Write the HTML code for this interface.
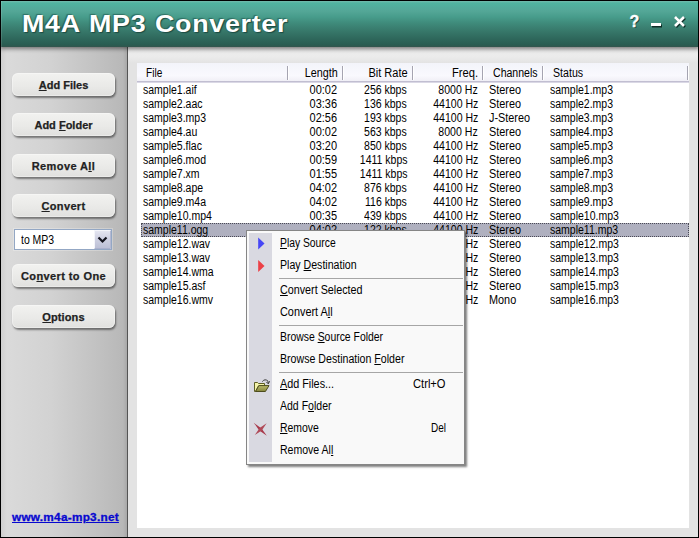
<!DOCTYPE html>
<html><head><meta charset="utf-8"><title>M4A MP3 Converter</title>
<style>
html,body{margin:0;padding:0;}
body{width:699px;height:538px;overflow:hidden;background:#000;font-family:"Liberation Sans",sans-serif;font-size:11px;color:#000;position:relative;}
#win{position:absolute;left:1px;top:1px;width:697px;height:536px;background:#e3e3e3;overflow:hidden;}
#title{position:absolute;left:0;top:0;width:697px;height:46px;background:linear-gradient(to bottom,#74bbad 0px,#50b4a0 2px,#52ad9c 6px,#54a797 10px,#479c8b 16px,#3f8b7b 22px,#37786a 30px,#2e675b 38px,#295c51 44px,#33544c 46px);box-shadow:0 1px 4px 1px rgba(0,0,0,0.45),1px 0 0 rgba(255,255,255,.12) inset;z-index:5;}
#title h1{position:absolute;left:0;top:0;margin:0;font-size:24px;line-height:28px;font-weight:bold;color:#fff;white-space:nowrap;}
#title h1 span{position:absolute;top:9px;text-shadow:1px 1px 1px #1d4a42,-1px -1px 1px rgba(30,80,70,.6);letter-spacing:0.6px;transform:scaleX(1.12);transform-origin:0 0;}
#side{position:absolute;left:0;top:45px;width:126px;height:491px;background:linear-gradient(to right,#cfcfcf 0px,#dadada 6px,#d2d2d2 50px,#c2c2c2 95px,#b8b8b8 122px,#a8a8a8 126px);}
#rtop{position:absolute;left:127px;top:46px;width:570px;height:16px;background:linear-gradient(to bottom,#e3e3e3 0,#ececec 7px,#ebebeb 10px,#e3e3e3 16px);}
#sideline{position:absolute;left:126px;top:45px;width:1px;height:491px;background:#555;}
.btn{position:absolute;left:11px;width:103px;height:23px;border-radius:6px;background:linear-gradient(to bottom,#f2f2f0,#e9e9e7 60%,#e0e0de);box-shadow:1px 2px 2px rgba(0,0,0,.45),0 0 0 1px rgba(255,255,255,.35) inset;text-align:center;font-weight:bold;font-size:11px;line-height:25px;color:#222;-webkit-text-stroke:0.25px #222;}
.btn u{text-decoration:underline;}
#list{position:absolute;left:136px;top:62px;width:552px;height:465px;background:#fff;}
#hdr{position:absolute;left:0;top:0;width:552px;height:18px;background:linear-gradient(to bottom,#f3f4fa,#f9f9fe 70%,#f0eff6);border-bottom:1px solid #c1bed1;box-shadow:0 1px 0 #dad8e5;}
.row{position:absolute;left:136px;width:552px;height:14px;line-height:14px;white-space:nowrap;}

.row span{position:absolute;top:0;font-size:12px;transform-origin:0 50%;}
.row .c2,.row .c3,.row .c4{transform-origin:100% 50%;}
.c1{left:5.5px;transform:scaleX(.875);} .c2{right:352px;transform:scaleX(.915);} .c3{right:282px;transform:scaleX(.875);} .c4{right:211px;transform:scaleX(.88);} .c5{left:352px;transform:scaleX(.905);} .c6{left:412.5px;transform:scaleX(.875);}
.row.sel::before{content:'';position:absolute;left:4px;right:0;top:0;bottom:0;background:#afb0bf;outline:1px dotted #4a4a55;outline-offset:-1px;}
.hl{position:absolute;top:0;height:19px;line-height:20px;white-space:nowrap;font-size:12px;transform-origin:0 50%;}
.sep{position:absolute;top:3px;width:1px;height:14px;background:#a5a4b1;box-shadow:1px 0 0 #fff;}
#combo{position:absolute;left:13px;top:228px;width:98px;height:21px;background:#fff;border:1px solid #93a7c4;box-sizing:border-box;box-shadow:0 0 0 1px rgba(255,255,255,.25);}
#combo span{position:absolute;left:6px;top:3px;line-height:14px;font-size:12px;transform:scaleX(.87);transform-origin:0 50%;white-space:nowrap;}
#combo .dd{position:absolute;right:0px;top:0px;width:17px;height:19px;background:linear-gradient(to bottom,#e4e5f0,#cfd1e2 45%,#bcc0d6);border:1px solid #f4f5fa;border-right-color:#b4b9d2;border-bottom-color:#aab0cc;box-sizing:border-box;border-radius:1px;}
#link{position:absolute;left:11px;top:510px;font-weight:bold;font-size:11px;line-height:13px;color:#0808d0;text-decoration:underline;white-space:nowrap;letter-spacing:0.25px;-webkit-text-stroke:0.3px #0808d0;transform:scaleX(1.07);transform-origin:0 0;}
#menu{position:absolute;left:245px;top:229px;width:219px;height:235px;box-sizing:border-box;border:1px solid #868686;background:#f9f9f9;box-shadow:2px 2px 2px rgba(0,0,0,.5);z-index:10;}
#menu .strip{position:absolute;left:2px;top:2px;width:23px;height:229px;background:#d9d9e1;}
.mi{position:absolute;left:32.7px;height:22px;line-height:22px;white-space:nowrap;margin-top:-1px;font-size:12px;transform-origin:0 50%;}
.mk{position:absolute;height:22px;line-height:22px;white-space:nowrap;margin-top:-1px;font-size:12px;transform-origin:0 50%;}
.ms{position:absolute;left:32px;width:184px;height:1px;background:#a6a6a6;}
.tb{position:absolute;z-index:6;color:#fff;font-weight:bold;text-shadow:1px 1px 0 #143a33;}
</style></head><body>
<div id="win">
<div id="title"><h1><span style="left:21px">M4A</span><span style="left:88px">MP3</span><span style="left:154px">Converter</span></h1></div>
<div id="rtop"></div><div id="side"></div><div id="sideline"></div>
<div class="btn" style="top:72px"><u>A</u>dd Files</div>
<div class="btn" style="top:112px">Add <u>F</u>older</div>
<div class="btn" style="top:153px;letter-spacing:0.4px">Remove A<u>l</u>l</div>
<div class="btn" style="top:193px;letter-spacing:0.35px"><u>C</u>onvert</div>
<div class="btn" style="top:263px;letter-spacing:0.4px">Co<u>n</u>vert to One</div>
<div class="btn" style="top:304px;letter-spacing:0.1px"><u>O</u>ptions</div>
<div id="list"><div id="hdr">
<span class="hl" style="left:9px;transform:scaleX(.84)">File</span>
<span class="hl" style="right:351px;transform-origin:100% 50%;transform:scaleX(.90)">Length</span>
<span class="hl" style="right:281px;transform-origin:100% 50%;transform:scaleX(.92)">Bit Rate</span>
<span class="hl" style="right:211px;transform-origin:100% 50%;transform:scaleX(.93)">Freq.</span>
<span class="hl" style="left:356px;transform:scaleX(.88)">Channels</span>
<span class="hl" style="left:415.5px;transform:scaleX(.885)">Status</span>
<i class="sep" style="left:150px"></i><i class="sep" style="left:205px"></i><i class="sep" style="left:275px"></i><i class="sep" style="left:345px"></i><i class="sep" style="left:405px"></i><i class="sep" style="left:550px"></i>
</div></div>
<div class="row" style="top:82px"><span class="c1">sample1.aif</span><span class="c2">00:02</span><span class="c3">256 kbps</span><span class="c4">8000 Hz</span><span class="c5">Stereo</span><span class="c6">sample1.mp3</span></div>
<div class="row" style="top:96px"><span class="c1">sample2.aac</span><span class="c2">03:36</span><span class="c3">136 kbps</span><span class="c4">44100 Hz</span><span class="c5">Stereo</span><span class="c6">sample2.mp3</span></div>
<div class="row" style="top:110px"><span class="c1">sample3.mp3</span><span class="c2">02:56</span><span class="c3">193 kbps</span><span class="c4">44100 Hz</span><span class="c5">J-Stereo</span><span class="c6">sample3.mp3</span></div>
<div class="row" style="top:124px"><span class="c1">sample4.au</span><span class="c2">00:02</span><span class="c3">563 kbps</span><span class="c4">8000 Hz</span><span class="c5">Stereo</span><span class="c6">sample4.mp3</span></div>
<div class="row" style="top:138px"><span class="c1">sample5.flac</span><span class="c2">03:20</span><span class="c3">850 kbps</span><span class="c4">44100 Hz</span><span class="c5">Stereo</span><span class="c6">sample5.mp3</span></div>
<div class="row" style="top:152px"><span class="c1">sample6.mod</span><span class="c2">00:59</span><span class="c3">1411 kbps</span><span class="c4">44100 Hz</span><span class="c5">Stereo</span><span class="c6">sample6.mp3</span></div>
<div class="row" style="top:166px"><span class="c1">sample7.xm</span><span class="c2">01:55</span><span class="c3">1411 kbps</span><span class="c4">44100 Hz</span><span class="c5">Stereo</span><span class="c6">sample7.mp3</span></div>
<div class="row" style="top:180px"><span class="c1">sample8.ape</span><span class="c2">04:02</span><span class="c3">876 kbps</span><span class="c4">44100 Hz</span><span class="c5">Stereo</span><span class="c6">sample8.mp3</span></div>
<div class="row" style="top:194px"><span class="c1">sample9.m4a</span><span class="c2">04:02</span><span class="c3">116 kbps</span><span class="c4">44100 Hz</span><span class="c5">Stereo</span><span class="c6">sample9.mp3</span></div>
<div class="row" style="top:208px"><span class="c1">sample10.mp4</span><span class="c2">00:35</span><span class="c3">439 kbps</span><span class="c4">44100 Hz</span><span class="c5">Stereo</span><span class="c6">sample10.mp3</span></div>
<div class="row sel" style="top:222px"><span class="c1">sample11.ogg</span><span class="c2">04:02</span><span class="c3">122 kbps</span><span class="c4">44100 Hz</span><span class="c5">Stereo</span><span class="c6">sample11.mp3</span></div>
<div class="row" style="top:236px"><span class="c1">sample12.wav</span><span class="c2">04:02</span><span class="c3">1411 kbps</span><span class="c4">44100 Hz</span><span class="c5">Stereo</span><span class="c6">sample12.mp3</span></div>
<div class="row" style="top:250px"><span class="c1">sample13.wav</span><span class="c2">04:02</span><span class="c3">1411 kbps</span><span class="c4">44100 Hz</span><span class="c5">Stereo</span><span class="c6">sample13.mp3</span></div>
<div class="row" style="top:264px"><span class="c1">sample14.wma</span><span class="c2">04:02</span><span class="c3">128 kbps</span><span class="c4">44100 Hz</span><span class="c5">Stereo</span><span class="c6">sample14.mp3</span></div>
<div class="row" style="top:278px"><span class="c1">sample15.asf</span><span class="c2">04:02</span><span class="c3">128 kbps</span><span class="c4">44100 Hz</span><span class="c5">Stereo</span><span class="c6">sample15.mp3</span></div>
<div class="row" style="top:292px"><span class="c1">sample16.wmv</span><span class="c2">04:02</span><span class="c3">32 kbps</span><span class="c4">44100 Hz</span><span class="c5">Mono</span><span class="c6">sample16.mp3</span></div>
<div id="combo"><span>to MP3</span><div class="dd"><svg width="15" height="17" viewBox="0 0 15 17" style="position:absolute;left:0;top:0"><path d="M3.5 6.5 L7.5 10.5 L11.5 6.5" fill="none" stroke="#15151f" stroke-width="2.2"/></svg></div></div>
<div id="link">www.m4a-mp3.net</div>
<div id="menu"><div class="strip"></div>
<svg width="24" height="232" style="position:absolute;left:2px;top:2px" viewBox="0 0 24 232">
<path d="M9.2 4.6 L9.2 16.6 L15.5 10.6 Z" fill="#4646f6"/>
<path d="M9.2 27 L9.2 39 L15.5 33 Z" fill="#ec4046"/>
<defs><linearGradient id="fg" x1="0" y1="0" x2="0" y2="1"><stop offset="0" stop-color="#bcbc6e"/><stop offset="1" stop-color="#84843a"/></linearGradient></defs>
<path d="M5.5 149.5 L8.5 149.5 L9.5 150.5 L15.5 150.5 L15.5 153 L9.5 153 L6.5 158.5 L5.5 158.5 Z" fill="#f3f3a8" stroke="#5e5e26" stroke-width="1"/>
<path d="M6.5 158.5 L9.8 152.6 L20 152.6 L16.4 158.5 Z" fill="url(#fg)" stroke="#4c4c1c" stroke-width="1"/>
<path d="M13.3 148.6 Q16 145.2 19 148.2 L19.2 150.2 M17.3 148.9 L19.3 150.9 L20.6 148.2" fill="none" stroke="#3c3c3c" stroke-width="1"/>
<path d="M4.8 189.8 L12.6 195.4 L17.8 202.8 L10.3 197.6 Z" fill="#a8384a"/>
<path d="M17.6 190.2 L12.8 197.4 L5.8 202 L10.6 195 Z" fill="#b04a58"/>
</svg>
<span class="mi" style="top:2px;transform:scaleX(0.861)"><u>P</u>lay Source</span>
<span class="mi" style="top:24px;transform:scaleX(0.883)">Play <u>D</u>estination</span>
<i class="ms" style="top:47px"></i>
<span class="mi" style="top:49px;transform:scaleX(0.896)"><u>C</u>onvert Selected</span>
<span class="mi" style="top:71px;transform:scaleX(0.906)">Convert A<u>l</u>l</span>
<i class="ms" style="top:94px"></i>
<span class="mi" style="top:96px;transform:scaleX(0.868)">Browse <u>S</u>ource Folder</span>
<span class="mi" style="top:118px;transform:scaleX(0.884)">Browse Destination <u>F</u>older</span>
<i class="ms" style="top:141px"></i>
<span class="mi" style="top:143px;transform:scaleX(0.9)"><u>A</u>dd Files...</span><span class="mk" style="left:166px;top:143px;transform:scaleX(0.93)">Ctrl+O</span>
<span class="mi" style="top:165px;transform:scaleX(0.877)">Add F<u>o</u>lder</span>
<span class="mi" style="top:187px;transform:scaleX(0.868)"><u>R</u>emove</span><span class="mk" style="left:183.5px;top:187px;transform:scaleX(0.83)">Del</span>
<span class="mi" style="top:209px;transform:scaleX(0.878)">Remove Al<u>l</u></span>
</div>
<span class="tb" style="left:628.5px;top:12px;font-size:16px;line-height:18px;-webkit-text-stroke:0.4px #fff">?</span>
<i class="tb" style="left:650px;top:22px;width:10px;height:3px;background:#fff;box-shadow:1px 1.5px 0 #0e2d27"></i>
<svg class="tb" style="left:671.5px;top:13.5px;z-index:6" width="14" height="14" viewBox="0 0 14 14"><path d="M3 3 L12 12 M12 3 L3 12" stroke="#0e2d27" stroke-width="2.6"/><path d="M2 2 L11 11 M11 2 L2 11" stroke="#fff" stroke-width="2.6"/></svg>
</div>
</body></html>
